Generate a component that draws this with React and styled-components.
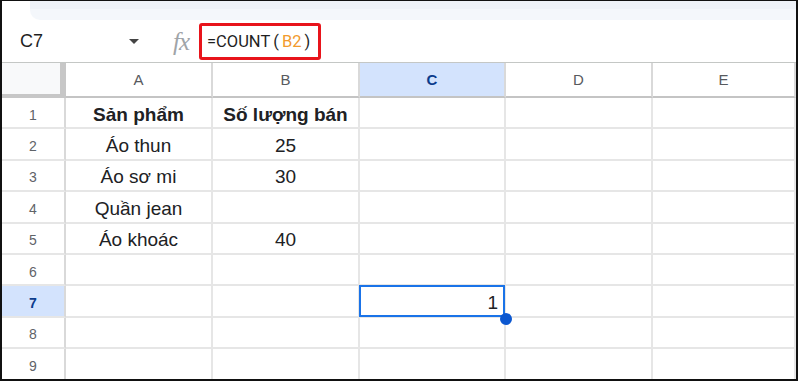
import React from "react";
import styled, { createGlobalStyle } from "styled-components";

const Global = createGlobalStyle`
  html, body { margin: 0; padding: 0; background: #fff; }
  body { font-family: "Liberation Sans", Arial, sans-serif; }
`;

const Frame = styled.div`
  width: 798px;
  height: 381px;
  box-sizing: border-box;
  border: 2px solid #111;
  border-top-width: 1px;
  background: #fff;
  display: flex;
  flex-direction: column;
  overflow: hidden;
`;

const TopStrip = styled.div`
  height: 19px;
  flex: none;
  display: flex;
  background: #fff;
`;

const StripInner = styled.div`
  flex: 1;
  margin-left: 28px;
  background: linear-gradient(#eef2f8 0 42%, #f4f7fb 42% 100%);
  border-bottom-left-radius: 10px;
`;

const FormulaBar = styled.div`
  height: 43px;
  flex: none;
  display: flex;
  align-items: center;
  border-bottom: 1px solid #c4c7c5;
  box-sizing: border-box;
`;

const NameBox = styled.div`
  width: 150px;
  display: flex;
  align-items: center;
  justify-content: space-between;
  padding: 0 13px 0 18px;
  box-sizing: border-box;
  font-size: 18px;
  color: #1f1f1f;
`;

const Caret = styled.span`
  width: 0;
  height: 0;
  border-left: 5px solid transparent;
  border-right: 5px solid transparent;
  border-top: 5px solid #444;
`;

const Fx = styled.span`
  margin-left: 21px;
  width: 26px;
  font-family: "Liberation Serif", serif;
  font-style: italic;
  font-size: 25px;
  line-height: 1;
  color: #a0a4a8;
  letter-spacing: -1px;
`;

const FormulaBox = styled.div`
  height: 37px;
  width: 122px;
  box-sizing: border-box;
  border: 3px solid #e8141b;
  border-radius: 3px;
  display: flex;
  align-items: center;
  padding-left: 5px;
  font-family: Roboto, "Liberation Sans", sans-serif;
  font-size: 16.5px;
  color: #1f1f1f;
  white-space: pre;
`;

const Ref = styled.span`
  color: #f29a2e;
`;

const Paren = styled.span`
  margin: 0 3px;
`;

const Grid = styled.div`
  flex: 1;
  display: grid;
  grid-template-columns: 64px 147px 147px 146px 147px 1fr;
  grid-template-rows: 35px repeat(9, 31.4px);
  overflow: hidden;
`;

const Corner = styled.div`
  background: #f8f9fa;
  border-right: 6px solid #c7c7c7;
  border-bottom: 4px solid #c7c7c7;
`;

const ColHead = styled.div`
  display: flex;
  align-items: center;
  justify-content: center;
  font-size: 15px;
  color: ${(p) => (p.$active ? "#0b3c8c" : "#575a5e")};
  font-weight: ${(p) => (p.$active ? 700 : 400)};
  background: ${(p) => (p.$active ? "#d3e3fd" : "#fff")};
  border-right: 2px solid #d9d9d9;
  border-bottom: 2px solid #c4c4c4;
  box-sizing: border-box;
`;

const RowHead = styled.div`
  display: flex;
  align-items: center;
  justify-content: center;
  padding-top: 4px;
  font-size: 14px;
  color: ${(p) => (p.$active ? "#0b3c8c" : "#5f6368")};
  font-weight: ${(p) => (p.$active ? 700 : 400)};
  background: ${(p) => (p.$active ? "#d3e3fd" : "#fff")};
  border-right: 2px solid #d9d9d9;
  border-bottom: 2px solid #e6e6e6;
  box-sizing: border-box;
`;

const Cell = styled.div`
  position: relative;
  z-index: ${(p) => (p.$selected ? 2 : "auto")};
  display: flex;
  align-items: center;
  justify-content: ${(p) => (p.$selected ? "flex-end" : "center")};
  padding: 4px 6px 0;
  font-size: 19px;
  color: #202124;
  font-weight: ${(p) => (p.$bold ? 700 : 400)};
  border-right: 2px solid #e6e6e6;
  border-bottom: 2px solid #e6e6e6;
  box-sizing: border-box;
  white-space: nowrap;
`;

const Selection = styled.div`
  position: absolute;
  left: -1px;
  top: -1px;
  right: -1px;
  bottom: -1px;
  border: 2px solid #1a73e8;
  pointer-events: none;
`;

const Handle = styled.div`
  position: absolute;
  right: -9px;
  bottom: -10px;
  width: 12px;
  height: 12px;
  border-radius: 50%;
  background: #0b57d0;
`;

const cols = ["A", "B", "C", "D", "E"];
const data = [
  [{ v: "Sản phẩm", b: true }, { v: "Số lượng bán", b: true }],
  [{ v: "Áo thun" }, { v: "25" }],
  [{ v: "Áo sơ mi" }, { v: "30" }],
  [{ v: "Quần jean" }, { v: "" }],
  [{ v: "Áo khoác" }, { v: "40" }],
  [],
  [],
  [],
  [],
];

export default function App() {
  return (
    <>
      <Global />
      <Frame>
        <TopStrip>
          <StripInner />
        </TopStrip>
        <FormulaBar>
          <NameBox>
            <span>C7</span>
            <Caret />
          </NameBox>
          <Fx>fx</Fx>
          <FormulaBox>
            =COUNT<Paren>(</Paren>
            <Ref>B2</Ref>
            <Paren>)</Paren>
          </FormulaBox>
        </FormulaBar>
        <Grid>
          <Corner />
          {cols.map((c) => (
            <ColHead key={c} $active={c === "C"}>
              {c}
            </ColHead>
          ))}
          {data.map((row, r) => (
            <React.Fragment key={r}>
              <RowHead $active={r === 6}>{r + 1}</RowHead>
              {cols.map((c, ci) => {
                const cell = row[ci];
                const isSel = r === 6 && ci === 2;
                return (
                  <Cell key={c} $bold={cell?.b} $selected={isSel}>
                    {isSel ? "1" : cell?.v}
                    {isSel && (
                      <Selection>
                        <Handle />
                      </Selection>
                    )}
                  </Cell>
                );
              })}
            </React.Fragment>
          ))}
        </Grid>
      </Frame>
    </>
  );
}
